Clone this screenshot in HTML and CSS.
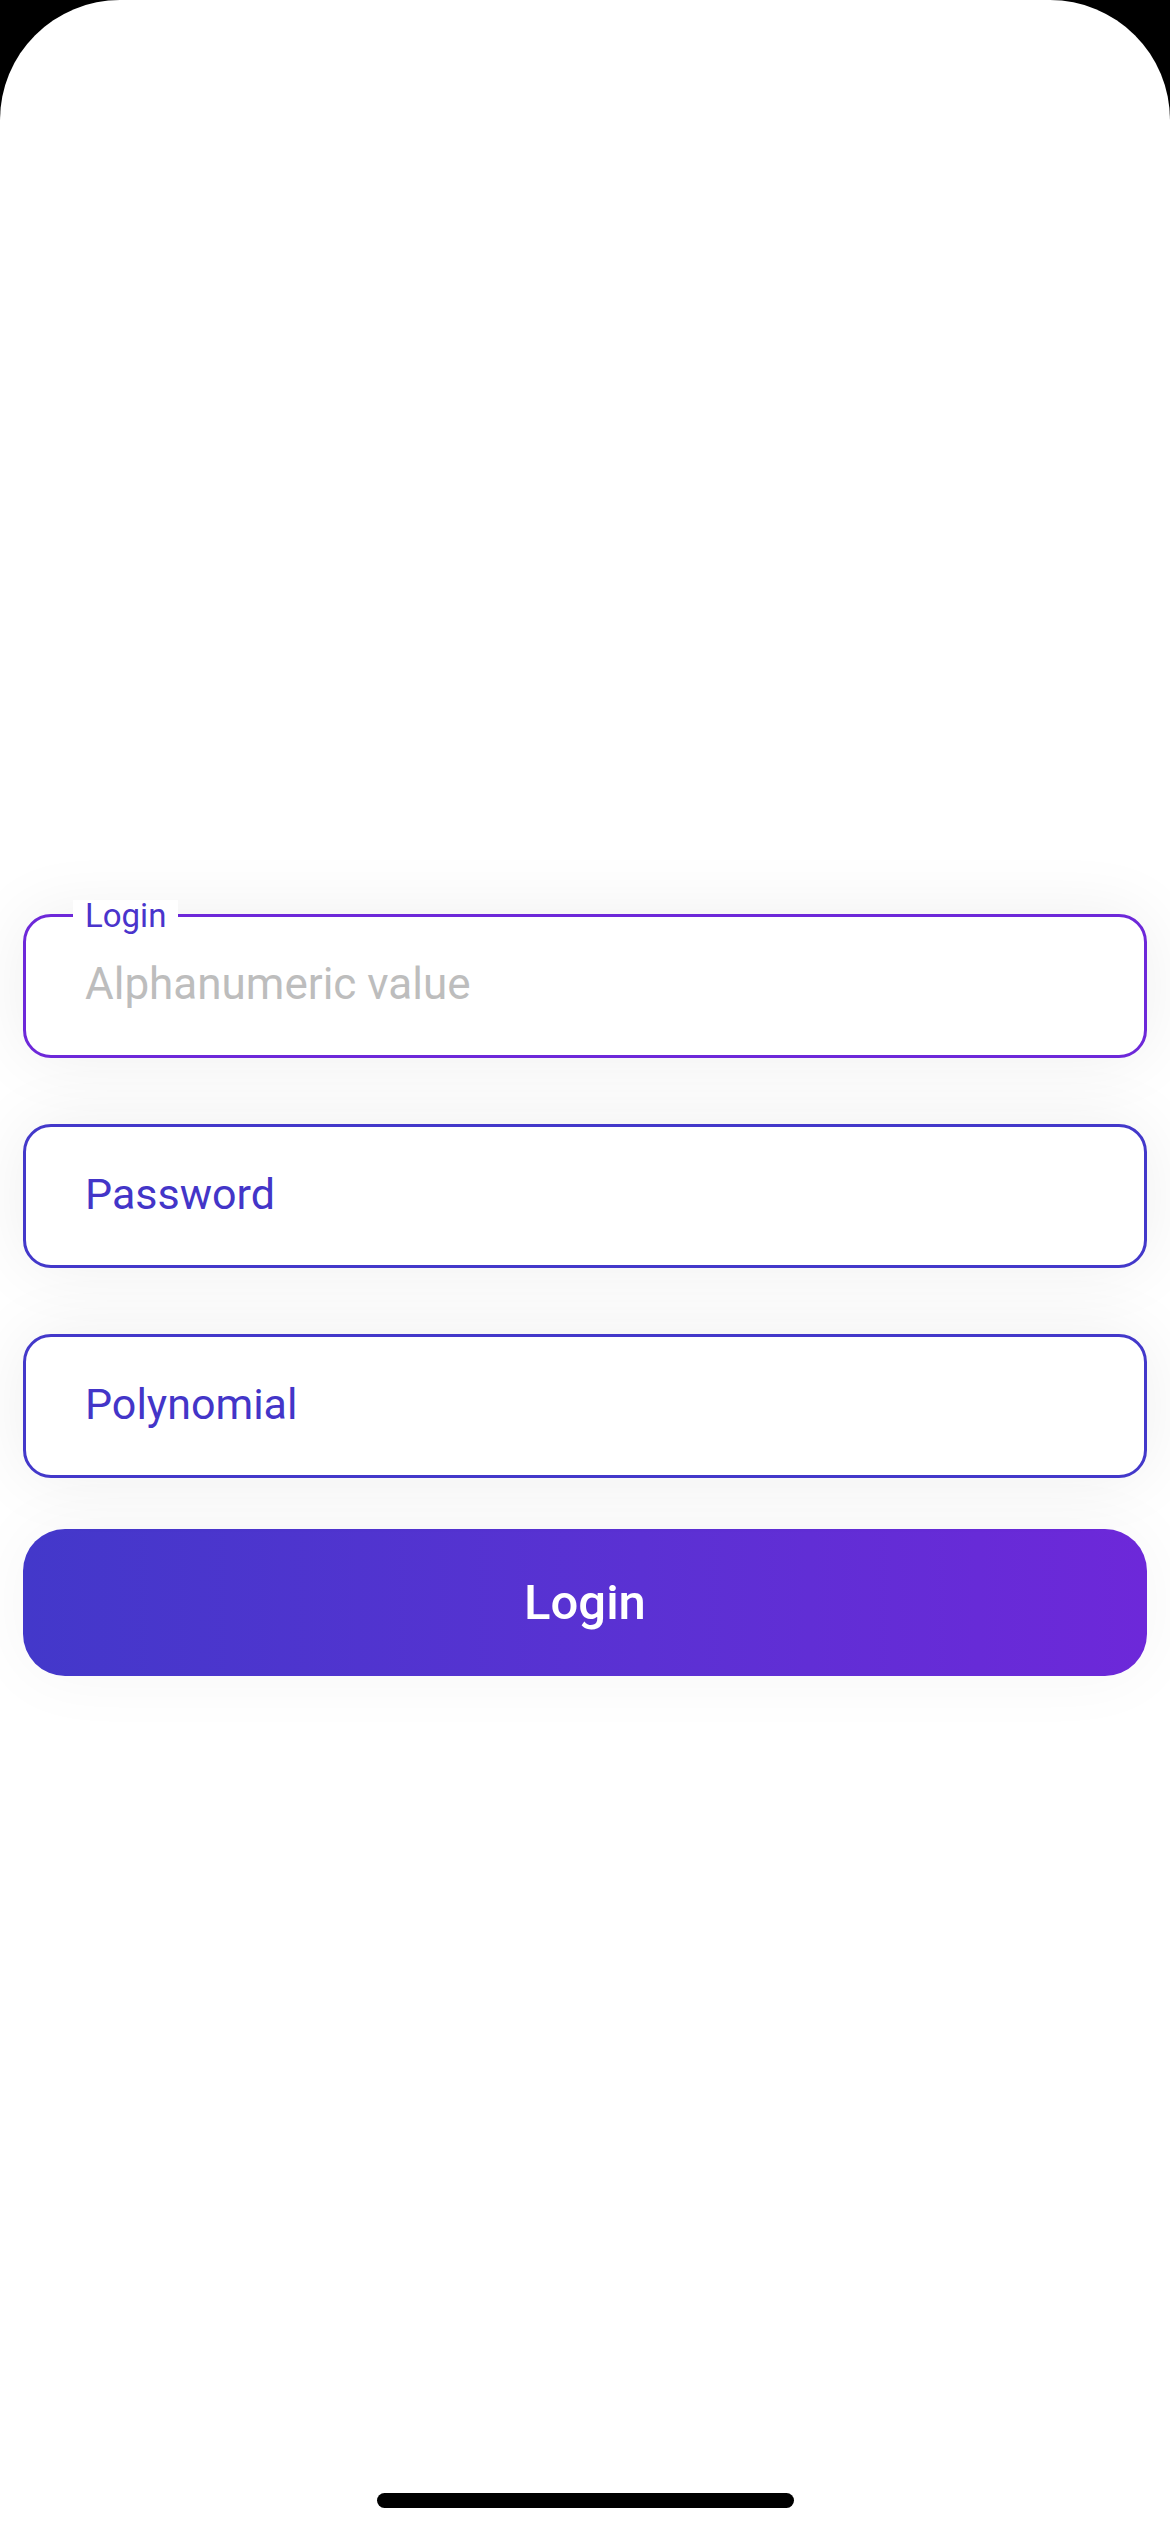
FILE: index.html
```html
<!DOCTYPE html>
<html lang="en">
<head>
<meta charset="utf-8">
<title>Login</title>
<link rel="stylesheet" href="styles.css">
</head>
<body>
<div class="screen">
  <form class="form">
    <div class="field field-focused">
      <span class="field-label">Login</span>
      <span class="field-placeholder">Alphanumeric value</span>
    </div>
    <div class="field">
      <span class="field-text">Password</span>
    </div>
    <div class="field">
      <span class="field-text">Polynomial</span>
    </div>
    <button type="button" class="btn">Login</button>
  </form>
  <div class="home-indicator"></div>
</div>
</body>
</html>
```

FILE: styles.css
```css
html, body {
  margin: 0;
  padding: 0;
  background: #000;
}

.screen {
  width: 1170px;
  height: 2532px;
  background: #fff;
  border-radius: 120px 120px 0 0;
  display: flex;
  flex-direction: column;
  box-sizing: border-box;
  padding-top: 914px;
  font-family: Roboto, "Liberation Sans", sans-serif;
  overflow: hidden;
}

.form {
  display: flex;
  flex-direction: column;
  gap: 66px;
  padding: 0 23px;
  margin: 0;
}

.field {
  position: relative;
  height: 144px;
  box-sizing: border-box;
  border: 3px solid #4338ca;
  border-radius: 28px;
  background: #fff;
  display: flex;
  align-items: center;
  padding: 0 0 5px 59px;
  box-shadow: 0 0 70px rgba(0, 0, 0, 0.07);
}

.field-focused {
  border-color: #6d28d9;
}

.field-label {
  position: absolute;
  top: -17px;
  left: 47px;
  padding: 0 12px;
  background: #fff;
  font-size: 33px;
  line-height: 32px;
  color: #4a34cc;
}

.field-placeholder {
  font-size: 44px;
  color: #bdbdbd;
}

.field-text {
  font-size: 43px;
  color: #4335c8;
}

.btn {
  margin-top: -15px;
  height: 147px;
  border: none;
  border-radius: 42px;
  background: linear-gradient(90deg, #4338ca 0%, #5b31d3 55%, #6d28d9 100%);
  color: #fff;
  font-family: Roboto, "Liberation Sans", sans-serif;
  font-size: 49px;
  font-weight: 500;
  padding: 0;
  box-shadow: 0 0 70px rgba(0, 0, 0, 0.045);
}

.home-indicator {
  margin-top: auto;
  margin-bottom: 24px;
  align-self: center;
  width: 417px;
  height: 15px;
  border-radius: 8px;
  background: #000;
}
```
